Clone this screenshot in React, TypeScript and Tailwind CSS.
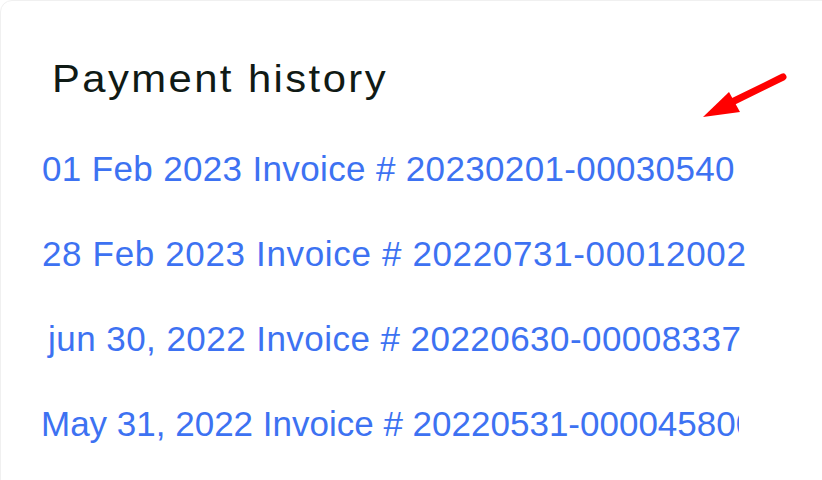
export default function App() {
  const rows = [
    { text: "01 Feb 2023 Invoice # 20230201-00030540", cls: "pl-[2px] tracking-[0.35px] w-[720px]" },
    { text: "28 Feb 2023 Invoice # 20220731-00012002", cls: "pl-[2px] tracking-[0.65px] w-[720px]" },
    { text: "jun 30, 2022 Invoice # 20220630-00008337", cls: "pl-[8px] tracking-[0.45px] w-[720px]" },
    { text: "May 31, 2022 Invoice # 20220531-000045800", cls: "pl-[1px] tracking-[0px] w-[699px]" },
  ];
  return (
    <div
      className="relative w-[822px] h-[480px] bg-white overflow-hidden"
      style={{ fontFamily: '"Liberation Sans", Arial, sans-serif' }}
    >
      <div className="w-[900px] h-[540px] border border-[#f0f0f0] rounded-tl-[12px] pt-[59px]">
        <h2 className="ml-[51px] text-[38px] leading-none tracking-[2.2px] text-[#101a15] font-normal origin-left scale-x-[1.1]">
          Payment history
        </h2>
        <ul className="mt-[28px] pl-[39px]">
          {rows.map((r, i) => (
            <li key={i} className="h-[85px] leading-[85px]">
              <a className={`block overflow-hidden whitespace-nowrap text-[35px] text-[#3d72f2] ${r.cls}`}>
                {r.text}
              </a>
            </li>
          ))}
        </ul>
      </div>
      <svg
        className="absolute left-[695px] top-[65px]"
        width="100"
        height="60"
        viewBox="695 65 100 60"
      >
        <line x1="783" y1="77" x2="728" y2="104" stroke="#ff0000" strokeWidth="7" strokeLinecap="round" />
        <polygon points="703,117 729,92 740,112" fill="#ff0000" />
      </svg>
    </div>
  );
}
